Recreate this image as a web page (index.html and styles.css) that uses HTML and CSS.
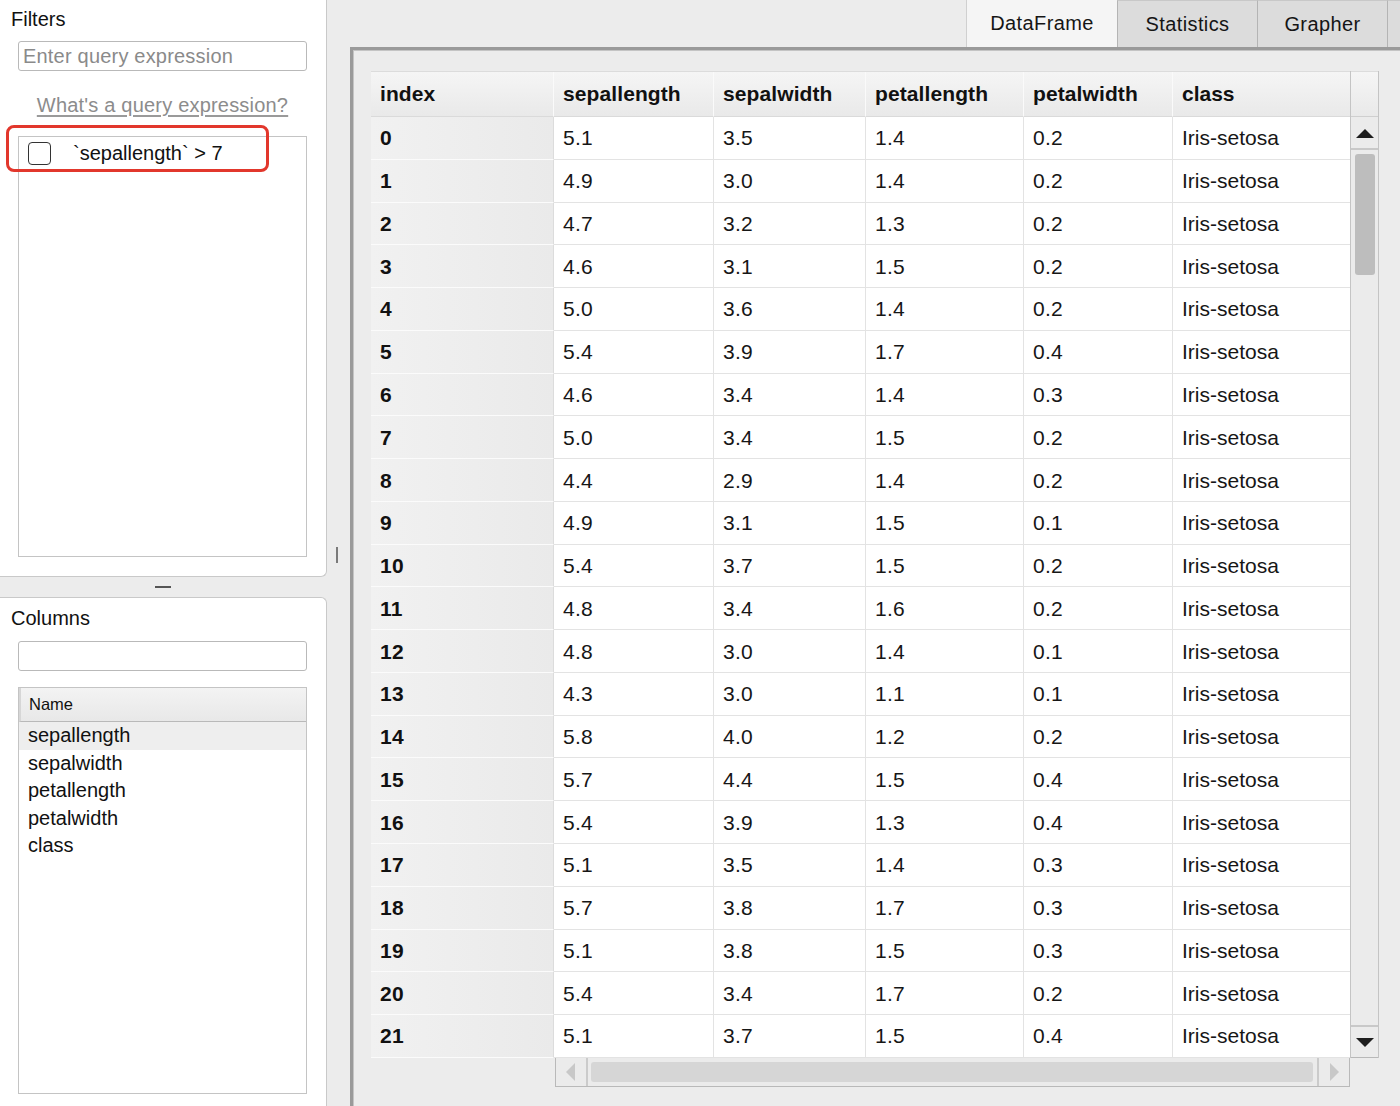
FILE: index.html
```html
<!DOCTYPE html>
<html>
<head>
<meta charset="utf-8">
<link rel="stylesheet" href="styles.css">
</head>
<body>
<div class="app">
  <aside class="sidebar">
    <section class="panel panel-filters">
      <div class="panel-title">Filters</div>
      <div class="textbox placeholder">Enter query expression</div>
      <div class="help-link"><span>What's a query expression?</span></div>
      <div class="listbox filter-list">
        <div class="filter-item">
          <span class="checkbox"></span>
          <span class="filter-text">`sepallength` &gt; 7</span>
        </div>
      </div>
      <div class="highlight"></div>
    </section>
    <div class="hsplit"><span class="hsplit-handle"></span></div>
    <section class="panel panel-columns">
      <div class="panel-title">Columns</div>
      <div class="textbox"></div>
      <div class="listbox col-list">
        <div class="col-head">Name</div>
        <div class="col-item selected">sepallength</div>
        <div class="col-item">sepalwidth</div>
        <div class="col-item">petallength</div>
        <div class="col-item">petalwidth</div>
        <div class="col-item">class</div>
      </div>
    </section>
  </aside>
  <div class="vsplit"><span class="vsplit-handle"></span></div>
  <main class="main">
    <nav class="tabbar">
      <div class="tab active">DataFrame</div>
      <div class="tab">Statistics</div>
      <div class="tab">Grapher</div>
      <div class="tab tab-more"></div>
    </nav>
    <div class="frame">
      <div class="tablewrap">
        <div class="grid">
          <div class="row head">
            <div class="cell">index</div><div class="cell">sepallength</div><div class="cell">sepalwidth</div><div class="cell">petallength</div><div class="cell">petalwidth</div><div class="cell">class</div>
          </div>
          <div class="row"><div class="cell idx">0</div><div class="cell">5.1</div><div class="cell">3.5</div><div class="cell">1.4</div><div class="cell">0.2</div><div class="cell">Iris-setosa</div></div>
          <div class="row"><div class="cell idx">1</div><div class="cell">4.9</div><div class="cell">3.0</div><div class="cell">1.4</div><div class="cell">0.2</div><div class="cell">Iris-setosa</div></div>
          <div class="row"><div class="cell idx">2</div><div class="cell">4.7</div><div class="cell">3.2</div><div class="cell">1.3</div><div class="cell">0.2</div><div class="cell">Iris-setosa</div></div>
          <div class="row"><div class="cell idx">3</div><div class="cell">4.6</div><div class="cell">3.1</div><div class="cell">1.5</div><div class="cell">0.2</div><div class="cell">Iris-setosa</div></div>
          <div class="row"><div class="cell idx">4</div><div class="cell">5.0</div><div class="cell">3.6</div><div class="cell">1.4</div><div class="cell">0.2</div><div class="cell">Iris-setosa</div></div>
          <div class="row"><div class="cell idx">5</div><div class="cell">5.4</div><div class="cell">3.9</div><div class="cell">1.7</div><div class="cell">0.4</div><div class="cell">Iris-setosa</div></div>
          <div class="row"><div class="cell idx">6</div><div class="cell">4.6</div><div class="cell">3.4</div><div class="cell">1.4</div><div class="cell">0.3</div><div class="cell">Iris-setosa</div></div>
          <div class="row"><div class="cell idx">7</div><div class="cell">5.0</div><div class="cell">3.4</div><div class="cell">1.5</div><div class="cell">0.2</div><div class="cell">Iris-setosa</div></div>
          <div class="row"><div class="cell idx">8</div><div class="cell">4.4</div><div class="cell">2.9</div><div class="cell">1.4</div><div class="cell">0.2</div><div class="cell">Iris-setosa</div></div>
          <div class="row"><div class="cell idx">9</div><div class="cell">4.9</div><div class="cell">3.1</div><div class="cell">1.5</div><div class="cell">0.1</div><div class="cell">Iris-setosa</div></div>
          <div class="row"><div class="cell idx">10</div><div class="cell">5.4</div><div class="cell">3.7</div><div class="cell">1.5</div><div class="cell">0.2</div><div class="cell">Iris-setosa</div></div>
          <div class="row"><div class="cell idx">11</div><div class="cell">4.8</div><div class="cell">3.4</div><div class="cell">1.6</div><div class="cell">0.2</div><div class="cell">Iris-setosa</div></div>
          <div class="row"><div class="cell idx">12</div><div class="cell">4.8</div><div class="cell">3.0</div><div class="cell">1.4</div><div class="cell">0.1</div><div class="cell">Iris-setosa</div></div>
          <div class="row"><div class="cell idx">13</div><div class="cell">4.3</div><div class="cell">3.0</div><div class="cell">1.1</div><div class="cell">0.1</div><div class="cell">Iris-setosa</div></div>
          <div class="row"><div class="cell idx">14</div><div class="cell">5.8</div><div class="cell">4.0</div><div class="cell">1.2</div><div class="cell">0.2</div><div class="cell">Iris-setosa</div></div>
          <div class="row"><div class="cell idx">15</div><div class="cell">5.7</div><div class="cell">4.4</div><div class="cell">1.5</div><div class="cell">0.4</div><div class="cell">Iris-setosa</div></div>
          <div class="row"><div class="cell idx">16</div><div class="cell">5.4</div><div class="cell">3.9</div><div class="cell">1.3</div><div class="cell">0.4</div><div class="cell">Iris-setosa</div></div>
          <div class="row"><div class="cell idx">17</div><div class="cell">5.1</div><div class="cell">3.5</div><div class="cell">1.4</div><div class="cell">0.3</div><div class="cell">Iris-setosa</div></div>
          <div class="row"><div class="cell idx">18</div><div class="cell">5.7</div><div class="cell">3.8</div><div class="cell">1.7</div><div class="cell">0.3</div><div class="cell">Iris-setosa</div></div>
          <div class="row"><div class="cell idx">19</div><div class="cell">5.1</div><div class="cell">3.8</div><div class="cell">1.5</div><div class="cell">0.3</div><div class="cell">Iris-setosa</div></div>
          <div class="row"><div class="cell idx">20</div><div class="cell">5.4</div><div class="cell">3.4</div><div class="cell">1.7</div><div class="cell">0.2</div><div class="cell">Iris-setosa</div></div>
          <div class="row"><div class="cell idx">21</div><div class="cell">5.1</div><div class="cell">3.7</div><div class="cell">1.5</div><div class="cell">0.4</div><div class="cell">Iris-setosa</div></div>
        </div>
        <div class="vscroll">
          <div class="vs-head"></div>
          <div class="vs-btn vs-up"><svg width="20" height="12" viewBox="0 0 20 12"><polygon points="10,1 19,10 1,10" fill="#1e1e1e"/></svg></div>
          <div class="vs-track"><div class="vs-thumb"></div></div>
          <div class="vs-btn vs-down"><svg width="20" height="12" viewBox="0 0 20 12"><polygon points="1,2 19,2 10,11" fill="#1e1e1e"/></svg></div>
        </div>
      </div>
      <div class="hscroll">
        <div class="hs-btn hs-left"><svg width="12" height="20" viewBox="0 0 12 20"><polygon points="10,1 10,19 1,10" fill="#c8c8c8"/></svg></div>
        <div class="hs-track"><div class="hs-thumb"></div></div>
        <div class="hs-btn hs-right"><svg width="12" height="20" viewBox="0 0 12 20"><polygon points="2,1 2,19 11,10" fill="#c8c8c8"/></svg></div>
      </div>
    </div>
  </main>
</div>
</body>
</html>
```

FILE: styles.css
```css
html, body {
  margin: 0;
  padding: 0;
}
body {
  background: #ececec;
  font-family: "Liberation Sans", Arial, Helvetica, sans-serif;
  color: #111;
  overflow: hidden;
}
.app {
  display: flex;
  width: 1400px;
  height: 1106px;
}

/* ---------- sidebar ---------- */
.sidebar {
  width: 327px;
  flex: none;
  display: flex;
  flex-direction: column;
}
.panel {
  background: #fff;
  box-sizing: border-box;
  position: relative;
}
.panel-filters {
  height: 577px;
  border-right: 1px solid #c9c9c9;
  border-bottom: 1px solid #c9c9c9;
  border-bottom-right-radius: 6px;
  padding-top: 7px;
}
.panel-columns {
  flex: 1;
  border-top: 1px solid #c9c9c9;
  border-right: 1px solid #c9c9c9;
  border-top-right-radius: 6px;
  padding-top: 8px;
}
.panel-title {
  font-size: 20px;
  line-height: 24px;
  padding-left: 11px;
  color: #111;
}
.textbox {
  margin: 10px 0 0 18px;
  width: 289px;
  height: 30px;
  box-sizing: border-box;
  border: 1px solid #b9b9b9;
  border-radius: 3px;
  background: #fff;
  font-size: 20px;
  line-height: 29px;
  padding-left: 4px;
  letter-spacing: 0.2px;
}
.placeholder {
  color: #8a8a8a;
}
.panel-columns .textbox {
  margin-top: 11px;
  height: 30px;
}
.help-link {
  margin: 22px 0 0 18px;
  width: 289px;
  text-align: center;
  font-size: 20px;
  line-height: 24px;
  color: #8c8c8c;
  letter-spacing: 0.2px;
}
.help-link span {
  text-decoration: underline;
  text-decoration-color: #9a9a9a;
  text-underline-offset: 3px;
}
.listbox {
  margin-left: 18px;
  width: 289px;
  box-sizing: border-box;
  border: 1px solid #c4c4c4;
  background: #fff;
}
.filter-list {
  margin-top: 19px;
  height: 421px;
  padding: 4px 0 0 9px;
}
.filter-item {
  display: flex;
  align-items: center;
  height: 24px;
}
.checkbox {
  width: 23px;
  height: 23px;
  box-sizing: border-box;
  border: 1.5px solid #333;
  border-radius: 4px;
  background: #fff;
  flex: none;
}
.filter-text {
  margin-left: 22px;
  font-size: 20px;
  color: #111;
}
.highlight {
  position: absolute;
  left: 6px;
  top: 125px;
  width: 263px;
  height: 47px;
  box-sizing: border-box;
  border: 3px solid #e2372c;
  border-radius: 8px;
}

.hsplit {
  height: 20px;
  flex: none;
  display: flex;
  justify-content: center;
  align-items: center;
}
.hsplit-handle {
  width: 16px;
  height: 1.5px;
  background: #555;
  margin-left: -1px;
}

.col-list {
  margin-top: 16px;
  height: 407px;
  overflow: hidden;
}
.col-head {
  height: 33px;
  line-height: 33px;
  font-size: 16.5px;
  padding-left: 8px;
  background: linear-gradient(#f3f3f3, #e8e8e8);
  border-bottom: 1px solid #b9b9b9;
  border-left: 2px solid #d6d6d6;
  color: #111;
}
.col-item {
  height: 27.5px;
  line-height: 27.5px;
  font-size: 20px;
  padding-left: 9px;
  color: #111;
}
.col-item.selected {
  background: #eeeeee;
}

/* ---------- vertical splitter ---------- */
.vsplit {
  width: 23px;
  flex: none;
  position: relative;
}
.vsplit-handle {
  position: absolute;
  left: 9px;
  top: 547px;
  width: 2px;
  height: 16px;
  background: #7a7a7a;
}

/* ---------- main ---------- */
.main {
  flex: 1;
  display: flex;
  flex-direction: column;
  min-width: 0;
  overflow: hidden;
}
.tabbar {
  height: 47px;
  flex: none;
  display: flex;
  padding-left: 616px;
  box-sizing: border-box;
}
.tab {
  flex: none;
  height: 47px;
  box-sizing: border-box;
  font-size: 20px;
  line-height: 46px;
  text-align: center;
  letter-spacing: 0.4px;
  color: #151515;
  background: #dcdcdc;
  border-left: 1px solid #b4b4b4;
  border-top: 1px solid #c8c8c8;
}
.tab.active {
  width: 151px;
  background: #f5f5f5;
  border-left: 1px solid #d0d0d0;
  border-top: none;
}
.tab:nth-child(2) { width: 140px; }
.tab:nth-child(3) { width: 130px; }
.tab-more { width: 20px; }

.frame {
  flex: 1;
  border-top: 3px solid #9a9a9a;
  border-left: 3px solid #9a9a9a;
  box-shadow: inset 1px 1px 0 #c4c4c4;
  padding: 21px 0 0 18px;
  box-sizing: border-box;
  background: #ececec;
}
.tablewrap {
  display: flex;
}
.grid {
  width: 979px;
  flex: none;
  background: #fff;
  border-top: 1px solid #dcdcdc;
  box-sizing: border-box;
}
.row {
  display: grid;
  grid-template-columns: 183px 160px 152px 158px 149px 177px;
  height: 42.77px;
}
.row.head {
  height: 45px;
}
.cell {
  box-sizing: border-box;
  padding-left: 9px;
  padding-top: 1px;
  font-size: 21px;
  display: flex;
  align-items: center;
  white-space: nowrap;
  border-right: 1px solid #e3e3e3;
  border-bottom: 1px solid #e3e3e3;
  color: #161616;
  letter-spacing: 0.3px;
}
.row .cell:last-child {
  border-right: none;
  letter-spacing: 0;
}
.head .cell {
  font-weight: bold;
  padding-top: 0;
  background: linear-gradient(#f5f5f5, #e9e9e9);
  border-right: 1px solid #fafafa;
  border-bottom: 1px solid #dadada;
  color: #111;
  letter-spacing: 0.1px;
}
.cell.idx {
  font-weight: bold;
  background: linear-gradient(to right, #f1f1f1, #eaeaea);
  border-right: 1px solid #dcdcdc;
  border-bottom: 1px solid #fbfbfb;
  color: #111;
}

/* vertical scrollbar */
.vscroll {
  width: 29px;
  flex: none;
  height: 987px;
  display: flex;
  flex-direction: column;
  box-sizing: border-box;
  border-left: 1px solid #c4c4c4;
  border-right: 1px solid #c4c4c4;
  background: #ebebeb;
}
.vs-head {
  height: 46px;
  background: linear-gradient(#f5f5f5, #e9e9e9);
  border-bottom: 1px solid #cfcfcf;
  border-top: 1px solid #dcdcdc;
  box-sizing: border-box;
}
.vs-btn {
  height: 33px;
  flex: none;
  display: flex;
  align-items: center;
  justify-content: center;
  box-sizing: border-box;
}
.vs-up {
  border-bottom: 2px solid #c8c8c8;
  padding-top: 2px;
}
.vs-down {
  border-top: 2px solid #c8c8c8;
  border-bottom: 1px solid #b8b8b8;
}
.vs-track {
  flex: 1;
  padding: 4px 3px 0 4px;
}
.vs-thumb {
  height: 121px;
  border-radius: 3px;
  background: #bdbdbd;
}

/* horizontal scrollbar */
.hscroll {
  margin-left: 184px;
  width: 795px;
  height: 29px;
  display: flex;
  box-sizing: border-box;
  border: 1px solid #b9b9b9;
  border-top: none;
  background: #ebebeb;
}
.hs-btn {
  width: 30px;
  flex: none;
  display: flex;
  align-items: center;
  justify-content: center;
}
.hs-left {
  border-right: 2px solid #cbcbcb;
}
.hs-right {
  border-left: 2px solid #cbcbcb;
}
.hs-track {
  flex: 1;
  padding: 4px 4px 4px 3px;
}
.hs-thumb {
  height: 100%;
  border-radius: 3px;
  background: #d6d6d6;
}
```
